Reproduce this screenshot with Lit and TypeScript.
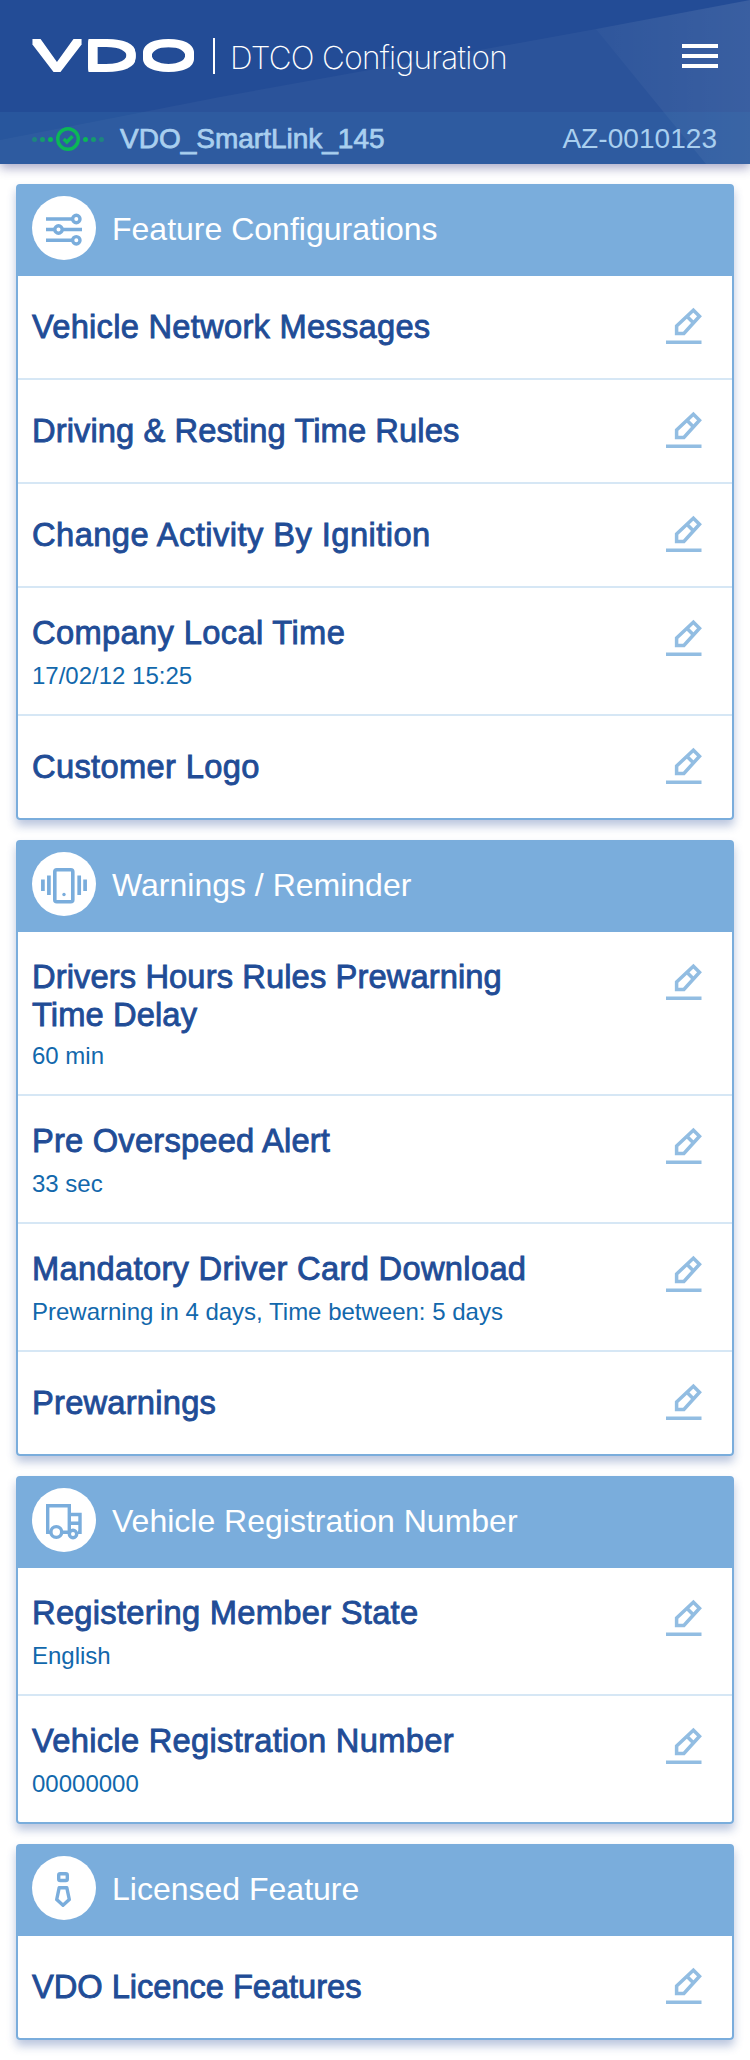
import { LitElement, html, css, svg } from "lit";
import { customElement, property } from "lit/decorators.js";

const icons: Record<string, unknown> = {
  sliders: svg`<g fill="none" stroke="#7aaddc" stroke-width="3.4">
    <path d="M14 23H40M14 33.5H22.500M30.500 33.500H50M14 44.300H40"/>
    <circle cx="44.300" cy="23" r="3.700"/><circle cx="26.500" cy="33.500" r="3.700"/><circle cx="44.300" cy="44.300" r="3.700"/></g>`,
  phone: svg`<rect x="22.800" y="17.800" width="18" height="32" rx="2" fill="none" stroke="#7aaddc" stroke-width="3.600"/>
    <circle cx="32" cy="42.500" r="1.700" fill="#7aaddc"/>
    <path d="M10.900 27.500V39M16.900 23.500V43M47.200 23.500V43M53.100 27.500V39" fill="none" stroke="#7aaddc" stroke-width="3.700"/>`,
  truck: svg`<g fill="none" stroke="#7aaddc" stroke-width="3.400">
    <path d="M19 44.200H15.700V17.700H37.300V44.200H30M37.300 26.500H48V44.300H46M37.300 35.300H48M31 44.300H37"/>
    <circle cx="24.300" cy="44" r="5.400"/><circle cx="41" cy="46" r="3.700"/></g>`,
  tie: svg`<g fill="none" stroke="#7aaddc" stroke-width="3.400" stroke-linejoin="round">
    <rect x="26.700" y="17.800" width="8.600" height="6.700" rx="1.500"/>
    <path d="M27.200 31.700H34.800L37.300 43.500L31 49.300L24.700 43.500Z"/></g>`,
};

interface Item { label: string; value?: string; track?: number }

// `track` is the letter-spacing of a label in pixels.
const sections: { title: string; icon: string; items: Item[] }[] = [
  { title: "Feature Configurations", icon: "sliders", items: [
    { label: "Vehicle Network Messages", track: 0.25 },
    { label: "Driving & Resting Time Rules", track: 0.08 },
    { label: "Change Activity By Ignition", track: 0.43 },
    { label: "Company Local Time", value: "17/02/12 15:25", track: 0.34 },
    { label: "Customer Logo", track: 0.33 },
  ] },
  { title: "Warnings / Reminder", icon: "phone", items: [
    { label: "Drivers Hours Rules Prewarning Time Delay", value: "60 min", track: 0.1 },
    { label: "Pre Overspeed Alert", value: "33 sec", track: 0.2 },
    { label: "Mandatory Driver Card Download", value: "Prewarning in 4 days, Time between: 5 days", track: 0.31 },
    { label: "Prewarnings", track: 0.22 },
  ] },
  { title: "Vehicle Registration Number", icon: "truck", items: [
    { label: "Registering Member State", value: "English", track: 0.28 },
    { label: "Vehicle Registration Number", value: "00000000", track: 0.28 },
  ] },
  { title: "Licensed Feature", icon: "tie", items: [{ label: "VDO Licence Features", track: -0.06 }] },
];

@customElement("config-item")
class ConfigItem extends LitElement {
  @property({ attribute: false }) item: Item = { label: "" };
  static styles = css`
    :host { display: block; }
    .row { display: flex; justify-content: space-between; padding: 32px 30px 0 14px; box-sizing: border-box; min-height: 102px; }
    .row.detailed { padding-top: 26px; padding-bottom: 24px; }
    .text { width: 510px; }
    .label { font-size: 32.7px; line-height: 38px; color: #214c96; -webkit-text-stroke: .85px #214c96; }
    .detailed .label { margin-bottom: 8px; min-height: 40px; }
    .value { font-size: 24px; line-height: 28px; color: #1268ac; }
    svg { display: block; width: 36px; height: 36px; flex: none; overflow: visible; }
    .detailed svg { margin-top: 6px; }
  `;
  render() {
    const { label, value, track = 0 } = this.item;
    return html`<div class="row ${value ? "detailed" : ""}">
      <div class="text"><div class="label" style="letter-spacing:${track}px">${label}</div>
      ${value ? html`<div class="value">${value}</div>` : ""}</div>
      <svg viewBox="0 0 36 36" fill="none" stroke="#92bde2">
        <path d="M0 34.200H35.500" stroke-width="3.600"/>
        <path d="M10.600 25.500V18L27.400 2.200L33.500 8.200L17.900 25.500Z" stroke-width="3.500"/>
        <path d="M21.300 8.700L27.300 14.700" stroke-width="3.500"/>
      </svg></div>`;
  }
}

@customElement("app-root")
class AppRoot extends LitElement {
  static styles = css`
    :host { display: block; min-height: 2060px; background: #fff; font-family: "Liberation Sans", Arial, sans-serif; }
    .top { position: relative; height: 164px; background: #234c96; box-shadow: 0 4px 10px rgba(30, 30, 110, .38); }
    .facets { position: absolute; inset: 0; width: 750px; height: 164px; }
    .bar { position: relative; height: 112px; box-sizing: border-box; padding: 0 32px; display: flex; align-items: center; }
    .logo { width: 168px; height: 56px; display: block; overflow: visible; font: 400 38px Roboto, sans-serif; text-shadow: 0 1px #fff, 0 2px #fff, 0 3px #fff, 0 4px #fff, 0 5px #fff; }
    .rule { width: 2px; height: 36px; background: #fff; margin: 0 15px 0 13px; }
    .app { font-family: Inter, sans-serif; font-weight: 250; font-size: 31.5px; letter-spacing: -.7px; color: #fff; white-space: nowrap; padding-top: 2px; }
    .menu { margin-left: auto; display: flex; flex-direction: column; gap: 6px; }
    .menu i { width: 36px; height: 4px; background: #fff; }
    .status { position: relative; height: 52px; box-sizing: border-box; padding: 1px 33px 0 32px; display: flex; align-items: center; background: rgba(60, 125, 180, .22); color: #a9cfef; font-size: 28px; }
    .status svg { width: 72px; height: 24px; margin-right: 16px; }
    .device { -webkit-text-stroke: .75px #a9cfef; }
    .plate { margin-left: auto; letter-spacing: .05px; }
    main { padding: 20px 16px; display: flex; flex-direction: column; gap: 20px; }
    section { border: 2px solid #7aaddc; border-radius: 4px; box-shadow: 0 6px 10px rgba(30, 65, 145, .3); }
    header { height: 90px; box-sizing: border-box; background: #7aaddc; display: flex; align-items: flex-start; padding: 10px 14px; color: #fff; }
    header svg { width: 64px; height: 64px; }
    h2 { margin: 0 0 0 16px; font-size: 32px; line-height: 66px; font-weight: 400; }
    config-item + config-item { border-top: 2px solid #d6e7f5; }
  `;
  render() {
    return html`
      <div class="top">
        <svg class="facets" viewBox="0 0 750 164">
          <defs><linearGradient id="fade" x1="0" x2="1"><stop offset="0" stop-color="#fff" stop-opacity=".02"/><stop offset="1" stop-color="#fff" stop-opacity=".07"/></linearGradient></defs>
          <path d="M0 140L220 97L596 29L750 0V164H0Z" fill="#fff" opacity=".04"/>
          <path d="M596 29L750 0V164H706Z" fill="url(#fade)"/>
        </svg>
        <div class="bar">
          <svg class="logo" viewBox="0 0 168 56" fill="#fff">
            <text x="-1" y="39" textLength="52" lengthAdjust="spacingAndGlyphs">V</text>
            <text x="49" y="39" textLength="59.800" lengthAdjust="spacingAndGlyphs">D</text>
            <text x="106" y="39" textLength="61" lengthAdjust="spacingAndGlyphs">O</text>
          </svg>
          <div class="rule"></div>
          <div class="app">DTCO Configuration</div>
          <div class="menu"><i></i><i></i><i></i></div>
        </div>
        <div class="status">
          <svg viewBox="0 0 72 24" fill="#0bb757">
            <circle cx="2.500" cy="12.500" r="2.500" opacity=".45"/><circle cx="10.500" cy="12.500" r="2.500" opacity=".7"/><circle cx="18.500" cy="12.500" r="2.500"/>
            <circle cx="53.500" cy="12.500" r="2.500"/><circle cx="61.500" cy="12.500" r="2.500" opacity=".7"/><circle cx="69.500" cy="12.500" r="2.500" opacity=".45"/>
            <circle cx="36" cy="12" r="10.300" fill="none" stroke="#0bb757" stroke-width="3.400"/>
            <path d="M31.700 12L34.800 15L40.500 9.300" fill="none" stroke="#0bb757" stroke-width="3.400"/>
          </svg>
          <span class="device">VDO_SmartLink_145</span><span class="plate">AZ-0010123</span>
        </div>
      </div>
      <main>${sections.map((s) => html`<section>
        <header><svg viewBox="0 0 64 64"><circle cx="32" cy="32" r="32" fill="#fff"/>${icons[s.icon]}</svg><h2>${s.title}</h2></header>
        ${s.items.map((i) => html`<config-item .item=${i}></config-item>`)}
      </section>`)}</main>`;
  }
}
